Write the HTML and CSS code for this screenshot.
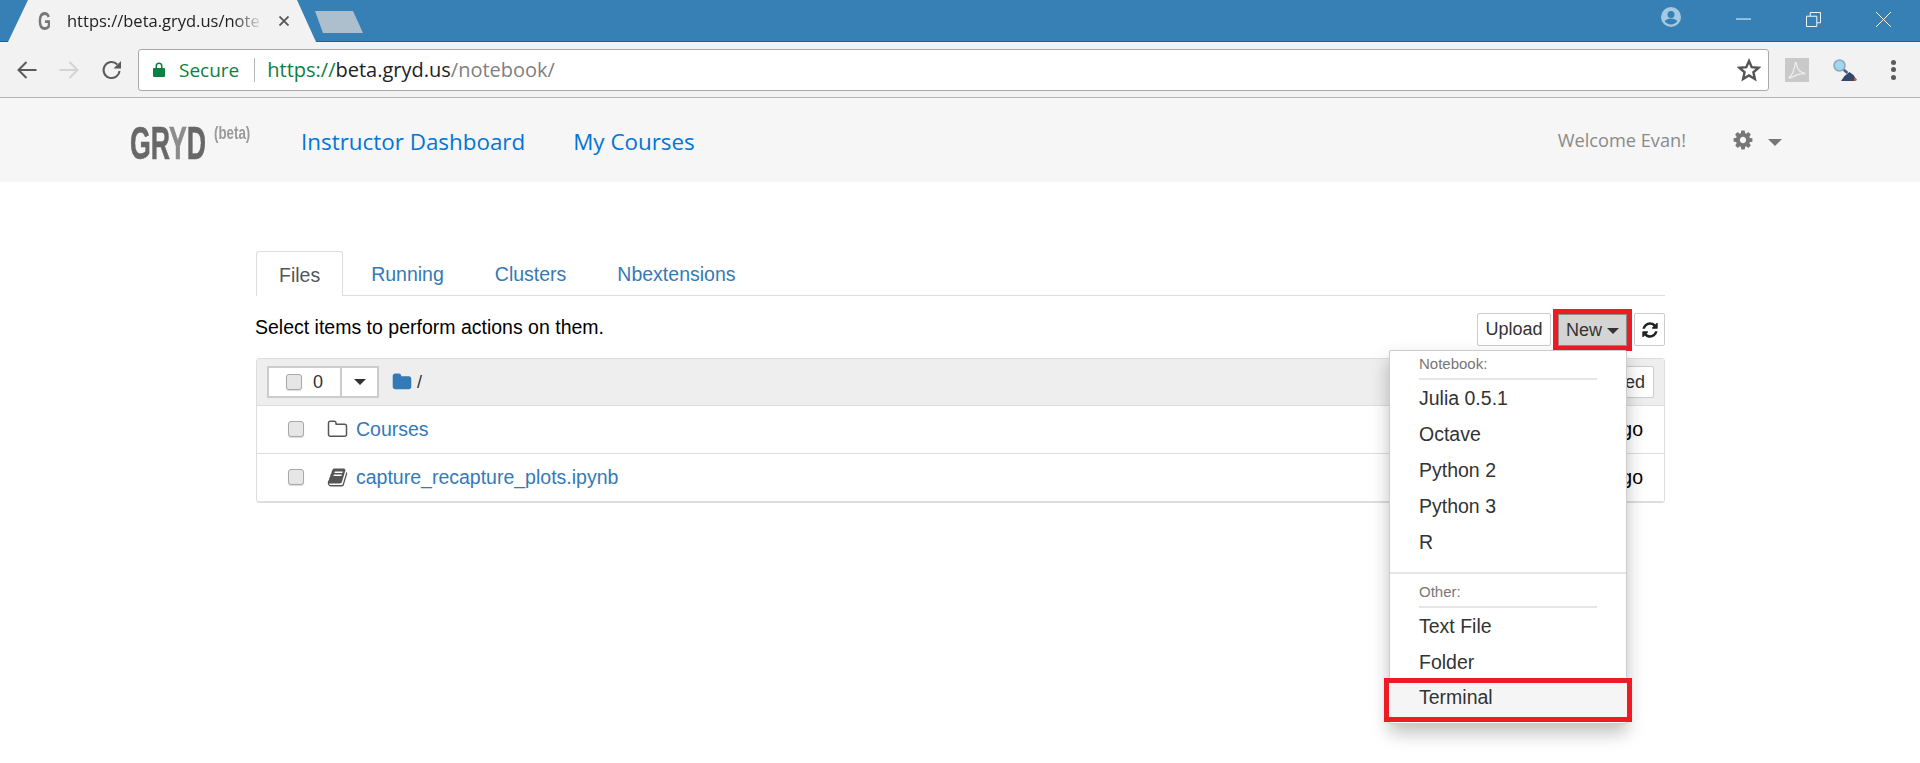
FILE: index.html
```html
<!DOCTYPE html>
<html lang="en">
<head>
  <meta charset="UTF-8" />
  <title>Notebook</title>
  <link rel="stylesheet" href="styles.css">
</head>
<body>
  <div class="titlebar">
    <div class="tab">
      <span class="tab-favicon">G</span>
      <span class="tab-title">https://beta.gryd.us/note</span>
      <svg class="tab-close" viewBox="0 0 10 10"><path d="M.5.5l9 9M9.500.5l-9 9"/></svg>
    </div>
    <div class="new-tab"></div>
    <div class="window-controls">
      <svg class="profile" viewBox="0 0 20 20"><circle cx="10" cy="10" r="10" fill="#a5c9e2"/><circle cx="10" cy="7.600" r="3.500" fill="#3680b5"/><path d="M3.600 14.200c1.600-2 4-2.800 6.400-2.800s4.800.8 6.400 2.800c-1.400 2-3.800 3.200-6.400 3.200s-5-1.200-6.400-3.200z" fill="#3680b5"/></svg>
      <svg class="win-btn" viewBox="0 0 16 16"><path d="M0 7.500h16"/></svg>
      <svg class="win-btn" viewBox="0 0 16 16"><path d="M.5 4.500h11v11h-11zM4.500 4.500v-4h11v11h-4"/></svg>
      <svg class="win-btn" viewBox="0 0 16 16"><path d="M0 0l16 16M16 0l-16 16"/></svg>
    </div>
  </div>

  <div class="toolbar">
    <svg class="tool-icon" viewBox="0 0 22 22"><path d="M20.500 11H3M10.500 3l-8 8 8 8"/></svg>
    <svg class="tool-icon disabled" viewBox="0 0 22 22"><path d="M1.500 11H19M11.500 3l8 8-8 8"/></svg>
    <svg class="tool-icon" viewBox="0 0 22 22"><path d="M18.500 12a8 8 0 1 1-2.200-6.500"/><path class="solid" d="M20 2v7.500h-7.500z"/></svg>
    <div class="omnibox">
      <svg class="lock" viewBox="0 0 12 15"><path fill-rule="evenodd" d="M1 6h1.500V4a3.500 3.500 0 0 1 7 0v2H11a1 1 0 0 1 1 1v7a1 1 0 0 1-1 1H1a1 1 0 0 1-1-1V7a1 1 0 0 1 1-1zM4 6h4V4a2 2 0 0 0-4 0z"/></svg>
      <span class="secure">Secure</span>
      <span class="url"><span class="url-scheme">https://</span>beta.gryd.us<span class="url-path">/notebook/</span></span>
      <svg class="star" viewBox="0 0 24 24"><path d="M12 3l2.700 6.200 6.800.6-5.100 4.500 1.500 6.700-5.900-3.500-5.900 3.500 1.500-6.700-5.100-4.500 6.800-.6z"/></svg>
    </div>
    <div class="ext-pdf">
      <svg viewBox="0 0 24 24"><path d="M4 19.500c3-1.500 5.500-8 6-13.500.2-2 1.600-2 1.600 0 0 5 4 9 8.900 9.500-5 0-9 1-13 3.500-2 1.200-3.500 1.200-3.500.500z"/></svg>
    </div>
    <svg class="ext-search" viewBox="0 0 24 22">
      <path d="M8 22l3.500-5 5-4 4 3 2.500 4-1 2z" fill="#34486e"/>
      <path d="M21 19l3 1-1 2h-2z" fill="#c2622c"/>
      <path d="M10.500 10.500l4 3.500" stroke="#4a5f80" stroke-width="2.500"/>
      <circle cx="6.500" cy="6.500" r="5.500" fill="#9fd6f2" stroke="#8da7bc" stroke-width="1.500"/>
    </svg>
    <div class="kebab"><i></i><i></i><i></i></div>
  </div>

  <nav class="navbar">
    <div class="brand"><span class="brand-name">GR<span class="brand-y">Y</span>D</span><span class="brand-beta">(beta)</span></div>
    <a class="nav-link" href="#">Instructor Dashboard</a>
    <a class="nav-link" href="#">My Courses</a>
    <span class="welcome">Welcome Evan!</span>
    <svg class="gear" viewBox="0 0 1792 1792"><path d="M1152 896q0-106-75-181t-181-75-181 75-75 181 75 181 181 75 181-75 75-181zm512-109v222q0 12-8 23t-20 13l-185 28q-19 54-39 91 35 50 107 138 10 12 10 25t-9 23q-27 37-99 108t-94 71q-12 0-26-9l-138-108q-44 23-91 38-16 136-29 186-7 28-36 28h-222q-14 0-24.500-8.500t-11.500-21.500l-28-184q-49-16-90-37l-141 107q-10 9-25 9-14 0-25-11-126-114-165-168-7-10-7-23 0-12 8-23 15-21 51-66.500t54-70.500q-27-50-41-99l-183-27q-13-2-21-12.500t-8-23.500v-222q0-12 8-23t19-13l186-28q14-46 39-92-40-57-107-138-10-12-10-24 0-10 9-23 26-36 98.500-107.500t94.500-71.500q13 0 26 10l138 107q44-23 91-38 16-136 29-186 7-28 36-28h222q14 0 24.500 8.500t11.500 21.500l28 184q49 16 90 37l142-107q9-9 24-9 13 0 25 10 129 119 165 170 7 8 7 22 0 12-8 23-15 21-51 66.500t-54 70.500q26 50 41 98l183 28q13 2 21 12.500t8 23.500z"/></svg>
    <span class="gear-caret"></span>
  </nav>

  <main class="container">
    <ul class="tabs">
      <li class="tabs-item active">Files</li>
      <li class="tabs-item">Running</li>
      <li class="tabs-item">Clusters</li>
      <li class="tabs-item">Nbextensions</li>
    </ul>

    <div class="actions">
      <span class="actions-text">Select items to perform actions on them.</span>
      <div class="actions-buttons">
        <button class="btn btn-upload">Upload</button>
        <button class="btn btn-new">New <span class="caret"></span></button>
        <button class="btn btn-refresh">
          <svg viewBox="0 0 1792 1792"><path d="M1639 1056q0 5-1 7-64 268-268 434.500t-478 166.500q-146 0-282.500-55t-243.500-157l-129 129q-19 19-45 19t-45-19-19-45v-448q0-26 19-45t45-19h448q26 0 45 19t19 45-19 45l-137 137q71 66 161 102t187 36q134 0 250-65t186-179q11-17 53-117 8-23 30-23h192q13 0 22.500 9.500t9.500 22.500zm25-800v448q0 26-19 45t-45 19h-448q-26 0-45-19t-19-45 19-45l138-138q-148-137-349-137-134 0-250 65t-186 179q-11 17-53 117-8 23-30 23h-199q-13 0-22.500-9.500t-9.500-22.500v-7q65-268 270-434.500t480-166.500q146 0 284 55.500t245 156.500l130-129q19-19 45-19t45 19 19 45z"/></svg>
        </button>
      </div>
    </div>

    <div class="list">
      <div class="list-header">
        <div class="select-all">
          <span class="select-count"><input type="checkbox" class="check"> <span>0</span></span>
          <span class="select-drop"><span class="caret"></span></span>
        </div>
        <svg class="folder-solid" viewBox="0 0 1792 1792"><path d="M1728 608v704q0 92-66 158t-158 66h-1216q-92 0-158-66t-66-158v-960q0-92 66-158t158-66h320q92 0 158 66t66 158v32h672q92 0 158 66t66 158z"/></svg>
        <span class="crumb">/</span>
        <button class="btn btn-sort">Last Modified</button>
      </div>
      <div class="list-row">
        <input type="checkbox" class="check">
        <svg class="row-icon" viewBox="0 0 1792 1792"><path d="M1600 1312v-704q0-40-28-68t-68-28h-704q-40 0-68-28t-28-68v-64q0-40-28-68t-68-28h-320q-40 0-68 28t-28 68v960q0 40 28 68t68 28h1216q40 0 68-28t28-68zm128-704v704q0 92-66 158t-158 66h-1216q-92 0-158-66t-66-158v-960q0-92 66-158t158-66h320q92 0 158 66t66 158v32h672q92 0 158 66t66 158z"/></svg>
        <a class="row-link" href="#">Courses</a>
        <span class="row-time">2 days ago</span>
      </div>
      <div class="list-row">
        <input type="checkbox" class="check">
        <svg class="row-icon" viewBox="0 0 1792 1792"><path d="M1703 478q40 57 18 129l-275 906q-19 64-76.500 107.500t-122.500 43.500h-923q-77 0-148.500-53.500t-99.500-131.500q-24-67-2-127 0-4 3-27t4-37q1-8-3-21.500t-3-19.500q2-11 8-21t16.500-23.500 16.500-23.500q23-38 45-91.500t30-91.500q3-10 .5-30t-.5-28q3-11 17-28t17-23q21-36 42-92t25-90q1-9-2.500-32t.5-28q4-13 22-30.500t22-22.500q19-26 42.500-84.500t27.500-96.500q1-8-3-25.500t-2-26.500q2-8 9-18t18-23 17-21q8-12 16.500-30.500t15-35 16-36 19.500-32 26.500-23.500 36-11.500 47.500 5.500l-1 3q38-9 51-9h761q74 0 114 56t18 130l-274 906q-36 119-71.500 153.500t-128.500 34.500h-869q-27 0-38 15-11 16-1 43 24 70 144 70h923q29 0 56-15.500t35-41.500l300-987q7-22 5-57 38 15 59 43zm-1064 2q-4 13 2 22.500t20 9.500h608q13 0 25.500-9.500t16.500-22.500l21-64q4-13-2-22.500t-20-9.500h-608q-13 0-25.500 9.500t-16.500 22.500zm-83 256q-4 13 2 22.500t20 9.500h608q13 0 25.500-9.500t16.500-22.500l21-64q4-13-2-22.500t-20-9.500h-608q-13 0-25.500 9.500t-16.500 22.500z"/></svg>
        <a class="row-link" href="#">capture_recapture_plots.ipynb</a>
        <span class="row-time">2 days ago</span>
      </div>

      <div class="menu">
        <div class="menu-label">Notebook:</div>
        <div class="menu-item">Julia 0.5.1</div>
        <div class="menu-item">Octave</div>
        <div class="menu-item">Python 2</div>
        <div class="menu-item">Python 3</div>
        <div class="menu-item">R</div>
        <div class="menu-divider"></div>
        <div class="menu-label">Other:</div>
        <div class="menu-item">Text File</div>
        <div class="menu-item">Folder</div>
        <div class="menu-item menu-item-marked">Terminal</div>
      </div>
    </div>
  </main>
</body>
</html>
```

FILE: styles.css
```css
html, body {
  margin: 0;
  height: 763px;
  overflow: hidden;
  background: #fff;
}

body {
  font-family: "Liberation Sans", Arial, sans-serif;
  font-size: 19.5px;
  color: #000;
}

/* browser chrome */
.titlebar {
  display: flex;
  height: 41px;
  background: #3680b5;
  border-bottom: 1px solid #24618f;
}

.tab {
  display: flex;
  align-items: center;
  flex: none;
  width: 308px;
  height: 42px;
  margin-left: 8px;
  padding: 0 27px 0 30px;
  box-sizing: border-box;
  background: #f2f2f2;
  clip-path: polygon(0 100%, 20px 0, 289px 0, 308px 100%);
  font-family: "Open Sans", sans-serif;
  font-size: 16.5px;
  color: #222;
}

.tab-favicon {
  width: 29px;
  flex: none;
  font-family: "Liberation Sans", sans-serif;
  font-weight: bold;
  font-size: 25px;
  color: #777;
  transform: scaleX(.67);
  transform-origin: left;
}

.tab-title {
  flex: 1;
  margin-bottom: 2px;
  overflow: hidden;
  white-space: nowrap;
  -webkit-mask-image: linear-gradient(to right, #000 85%, transparent);
  mask-image: linear-gradient(to right, #000 85%, transparent);
}

.tab-close {
  width: 10px;
  height: 10px;
  margin-left: 16px;
  flex: none;
  fill: none;
  stroke: #555;
  stroke-width: 1.8;
}

.new-tab {
  width: 48px;
  height: 22px;
  margin: 11px 0 0 -1px;
  background: #adbfcc;
  clip-path: polygon(0 0, 38px 0, 48px 100%, 8px 100%);
}

.window-controls {
  display: flex;
  align-items: center;
  margin-left: auto;
  height: 39px;
}

.profile {
  width: 20px;
  height: 20px;
  margin: 0 55px 5px 0;
}

.win-btn {
  width: 15px;
  height: 15px;
  margin-right: 55px;
  fill: none;
  stroke: #fff;
  stroke-width: 1;
}

.win-btn:last-child {
  margin-right: 29px;
}

.toolbar {
  display: flex;
  align-items: center;
  height: 55px;
  padding-left: 16px;
  background: #f2f2f2;
  border-bottom: 1px solid #b3b3b3;
}

.tool-icon {
  width: 22px;
  height: 22px;
  margin-right: 20px;
  flex: none;
  fill: none;
  stroke: #5a5a5a;
  stroke-width: 2;
}

.tool-icon.disabled {
  margin-right: 21px;
  stroke: #d4d4d4;
}

.tool-icon .solid {
  fill: #5a5a5a;
  stroke: none;
}

.omnibox {
  display: flex;
  align-items: center;
  flex: none;
  width: 1631px;
  height: 42px;
  margin-left: -5px;
  padding: 0 7px 0 14px;
  box-sizing: border-box;
  background: #fff;
  border: 1px solid #a9a9a9;
  border-radius: 3px;
  font-family: "Open Sans", sans-serif;
  font-size: 20px;
}

.lock {
  width: 12px;
  height: 15px;
  fill: #0b8043;
  flex: none;
}

.secure {
  margin-left: 14px;
  padding-right: 15px;
  line-height: 24px;
  font-size: 19px;
  color: #0b8043;
  border-right: 1px solid #b5b5b5;
}

.url {
  margin-left: 12px;
  color: #222;
}

.url-scheme {
  color: #0b8043;
}

.url-path {
  color: #808080;
}

.star {
  width: 24px;
  height: 24px;
  margin-left: auto;
  fill: none;
  stroke: #555;
  stroke-width: 2.4;
}

.ext-pdf {
  width: 24px;
  height: 24px;
  margin-left: 16px;
  flex: none;
  background: #c9c9c9;
}

.ext-pdf svg {
  display: block;
  fill: none;
  stroke: #eee;
  stroke-width: 1.3;
}

.ext-search {
  width: 24px;
  height: 22px;
  margin-left: 24px;
  flex: none;
}

.kebab {
  display: flex;
  flex-direction: column;
  gap: 2.5px;
  margin-left: 34px;
}

.kebab i {
  width: 5px;
  height: 5px;
  border-radius: 50%;
  background: #5a5a5a;
}

/* site navbar */
.navbar {
  display: flex;
  align-items: center;
  height: 84px;
  padding-left: 130px;
  background: #f6f6f6;
}

.brand {
  display: flex;
  align-items: flex-start;
  width: 171px;
  margin-top: 6px;
  font-weight: bold;
}

.brand-name {
  width: 82px;
  flex: none;
  font-size: 46px;
  line-height: 40px;
  white-space: nowrap;
  color: #686868;
  -webkit-text-stroke: .6px #686868;
  transform: scaleX(.58);
  transform-origin: left;
}

.brand-y {
  color: #8c8c8c;
  -webkit-text-stroke: .6px #8c8c8c;
}

.brand-beta {
  margin-left: 2px;
  font-size: 19px;
  line-height: 20px;
  color: #9a9a9a;
  transform: scaleX(.7);
  transform-origin: left;
}

.nav-link {
  margin: 2px 48px 0 0;
  font-family: "Open Sans", sans-serif;
  font-size: 22.4px;
  color: #0275d8;
  text-decoration: none;
}

.welcome {
  margin-left: auto;
  font-family: "Open Sans", sans-serif;
  font-size: 18.2px;
  color: #8a8a8a;
}

.gear {
  width: 22px;
  height: 22px;
  margin-left: 46px;
  fill: #777;
}

.gear-caret {
  width: 0;
  height: 0;
  margin: 5px 138px 0 14px;
  border-top: 7px solid #777;
  border-left: 7px solid transparent;
  border-right: 7px solid transparent;
}

/* notebook page */
.container {
  width: 1409px;
  margin: 69px 0 0 256px;
}

.tabs {
  display: flex;
  height: 44px;
  margin: 0;
  padding: 0;
  list-style: none;
  border-bottom: 1px solid #ddd;
}

.tabs-item {
  padding: 0 23px 0 28px;
  line-height: 46px;
  color: #337ab7;
}

.tabs-item.active {
  height: 44px;
  padding: 0 22px;
  color: #555;
  background: #fff;
  border: 1px solid #ddd;
  border-bottom: 0;
  border-radius: 3px 3px 0 0;
}

.actions {
  display: flex;
  align-items: center;
  justify-content: space-between;
  height: 62px;
  margin-left: -1px;
}

.actions-buttons {
  display: flex;
  align-items: flex-start;
  gap: 7px;
  margin-top: 5px;
}

.btn {
  height: 33px;
  padding: 0 8px;
  font: inherit;
  font-size: 18px;
  color: #333;
  background: #fff;
  border: 1px solid #ccc;
  border-radius: 2px;
}

.btn-upload {
  width: 74px;
  padding: 0;
}

.btn-new {
  width: 69px;
  height: 32px;
  margin-top: 1px;
  padding: 0;
  background: #d4d4d4;
  border-color: #8c8c8c;
  border-radius: 0;
  outline: 5px solid #ed1c24;
}

.btn-refresh {
  width: 31px;
  padding: 0;
}

.btn-refresh svg {
  display: block;
  width: 18px;
  height: 18px;
  margin: auto;
  fill: #222;
}

.caret {
  display: inline-block;
  width: 0;
  height: 0;
  vertical-align: middle;
  border-top: 6px solid #333;
  border-left: 6px solid transparent;
  border-right: 6px solid transparent;
}

.list {
  position: relative;
  border: 1px solid #ddd;
  border-radius: 3px;
}

.list-header {
  display: flex;
  align-items: center;
  height: 47px;
  padding: 0 10px;
  box-sizing: border-box;
  background: #eee;
  border-bottom: 1px solid #ddd;
}

.select-all {
  display: flex;
  height: 32px;
  background: #fff;
  border: 2px solid #ccc;
  box-sizing: border-box;
}

.select-count {
  display: flex;
  align-items: center;
  justify-content: center;
  gap: 11px;
  width: 71px;
  font-size: 18px;
  color: #333;
  border-right: 2px solid #ccc;
}

.select-drop {
  display: flex;
  align-items: center;
  justify-content: center;
  width: 35px;
}

.check {
  appearance: none;
  width: 16px;
  height: 16px;
  margin: 0;
  flex: none;
  background: #e6e6e6;
  border: 1px solid #a8a8a8;
  border-radius: 3px;
  box-shadow: 0 1px 1px #ddd;
}

.list-row .check {
  margin-top: -2px;
}

.folder-solid {
  width: 20px;
  height: 20px;
  margin-left: 13px;
  flex: none;
  fill: #337ab7;
}

.crumb {
  margin-left: 5px;
  font-size: 18px;
  color: #333;
}

.btn-sort {
  height: 32px;
  margin-left: auto;
}

.list-row {
  display: flex;
  align-items: center;
  height: 48px;
  padding: 0 21px 0 31px;
  box-sizing: border-box;
  border-bottom: 1px solid #ddd;
}

.list-row:last-of-type {
  height: 46px;
  border-bottom: 0;
}

.row-icon {
  width: 21px;
  height: 21px;
  margin-left: 23px;
  flex: none;
  fill: #555;
}

.row-link {
  margin-left: 8px;
  color: #337ab7;
  text-decoration: none;
}

.row-time {
  margin-left: auto;
}

/* dropdown over the list */
.menu {
  position: absolute;
  top: -9px;
  left: 1132px;
  width: 238px;
  box-sizing: border-box;
  padding: 3px 0 0;
  background: #fff;
  border: 1px solid #ccc;
  border-radius: 2px;
  box-shadow: 0 9px 18px rgba(0, 0, 0, .25);
  color: #333;
}

.menu-label {
  margin: 0 29px;
  padding-bottom: 5px;
  font-size: 15px;
  line-height: 19px;
  color: #777;
  border-bottom: 2px solid #e5e5e5;
}

.menu-item {
  height: 36px;
  padding-left: 29px;
  line-height: 36px;
}

.menu-divider {
  height: 2px;
  margin: 12px 0 8px;
  background: #e5e5e5;
}

.menu-item-marked {
  height: 34px;
  margin: 3px -1px 6px;
  padding-left: 30px;
  line-height: 28px;
  background: #f5f5f5;
  outline: 5px solid #ed1c24;
}
```
